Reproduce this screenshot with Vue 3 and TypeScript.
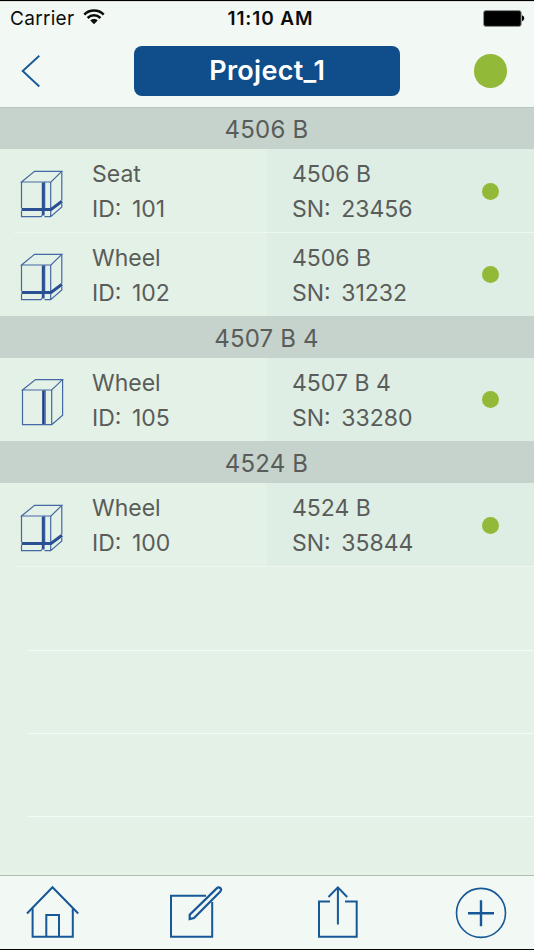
<script setup lang="ts">
interface Item {
  name: string
  id: string
  model: string
  sn: string
  banded: boolean
}
interface Section {
  title: string
  items: Item[]
}

const sections: Section[] = [
  {
    title: '4506 B',
    items: [
      { name: 'Seat', id: '101', model: '4506 B', sn: '23456', banded: true },
      { name: 'Wheel', id: '102', model: '4506 B', sn: '31232', banded: true },
    ],
  },
  {
    title: '4507 B 4',
    items: [{ name: 'Wheel', id: '105', model: '4507 B 4', sn: '33280', banded: false }],
  },
  {
    title: '4524 B',
    items: [{ name: 'Wheel', id: '100', model: '4524 B', sn: '35844', banded: true }],
  },
]
</script>

<template>
  <div class="screen">
    <header class="header">
      <div class="status">
        <div class="carrier">
          <span>Carrier</span>
          <svg class="wifi" width="22" height="16" viewBox="0 0 22 16">
            <g fill="none" stroke="#0b0d0c" stroke-width="2.5">
              <path d="M1.3 5.6C6.5.2 15.5.2 20.7 5.6" />
              <path d="M4.6 9C8.3 5.4 13.7 5.4 17.4 9" />
            </g>
            <path d="M7.3 11.5C9.3 9.6 12.7 9.6 14.7 11.5L11 15.2Z" fill="#0b0d0c" />
          </svg>
        </div>
        <span class="time">11:10 AM</span>
        <svg class="battery" width="42" height="17" viewBox="0 0 42 17">
          <rect x=".6" y=".6" width="37.6" height="15.8" rx="2.2" fill="#000" stroke="#8d918f" stroke-width="1" />
          <path d="M39 5.3Q41.2 6 41.2 8.3Q41.2 10.6 39 11.3Z" fill="#000" />
        </svg>
      </div>
      <nav class="nav">
        <svg class="back" width="20" height="34" viewBox="0 0 20 34">
          <path d="M18.3 1.7L1.7 17L18.3 32.5" fill="none" stroke="#175896" stroke-width="1.9" />
        </svg>
        <h1 class="title"><span>Project_1</span></h1>
        <i class="dot dot-large"></i>
      </nav>
    </header>

    <main class="list">
      <section v-for="section in sections" :key="section.title">
        <h2 class="section-title"><span>{{ section.title }}</span></h2>
        <div v-for="item in section.items" :key="item.id" class="row">
          <div class="cell left">
            <svg class="box" width="44" height="48" viewBox="0 0 44 48">
              <g v-if="item.banded" fill="none" stroke="#4468a3" stroke-width="1.2">
                <path d="M1.5 12L14.5 1.4H41.8L31 12Z" />
                <path d="M1.5 12V38M30.7 12V38M41.8 1.4V30.5M24.7 12V38" />
                <path d="M1.5 41V46.6H21L22 45.5M24.5 46.6H30.7L41.8 37V33.5M30.7 46.6V41" />
                <path d="M1.5 39.5H31L42 31.2" stroke="#2a4f93" stroke-width="3" />
                <path d="M23.2 12.5V45.5" stroke="#2a4f93" stroke-width="2.8" />
              </g>
              <g v-else fill="none" stroke="#4468a3" stroke-width="1.2">
                <path d="M2.5 12L15.5 1.6H42.6L31.7 12Z" />
                <path d="M2.5 12V46.7H31.7V12M42.6 1.6V37.3L31.7 46.7M25.2 12V46" />
                <path d="M23.4 12.5V46" stroke="#173a8a" stroke-width="2.4" />
              </g>
            </svg>
            <div class="lines">
              <div><span class="name">{{ item.name }}</span></div>
              <div><span class="key">ID:</span><span>{{ item.id }}</span></div>
            </div>
          </div>
          <div class="cell right">
            <div class="lines">
              <div><span>{{ item.model }}</span></div>
              <div><span class="key">SN:</span><span>{{ item.sn }}</span></div>
            </div>
            <i class="dot dot-row"></i>
          </div>
        </div>
      </section>
      <div v-for="n in 4" :key="n" class="empty"></div>
    </main>

    <footer class="toolbar">
      <svg width="54" height="54" viewBox="0 0 54 54" fill="none" stroke="#175896" stroke-width="2">
        <path d="M1 28.5L26.5 2.2L52.2 28.5" />
        <path d="M6.6 23.5V51.8H46.8V23.5M20.3 51V30H33V51" />
      </svg>
      <svg class="compose" width="54" height="54" viewBox="0 0 54 54" fill="none" stroke="#175896" stroke-width="2">
        <path d="M37 10.8H2V51.8H43.2V17" />
        <path d="M20.7 34V29.8L47.7 3.4C50.4 .9 53.6 4 51.1 6.7L25 33Z" stroke-width="2.2" />
      </svg>
      <svg class="share" width="42" height="54" viewBox="0 0 42 54" fill="none" stroke="#175896" stroke-width="2">
        <path d="M13 16.6H2V51.8H39.7V16.6H28" />
        <path d="M20.9 39.5V3M11.5 12L20.9 2.4L30.2 12" />
      </svg>
      <svg class="add" width="52" height="54" viewBox="0 0 52 54" fill="none" stroke="#175896">
        <circle cx="26" cy="27.9" r="24.5" stroke-width="1.6" />
        <path d="M13 28.2H39M26 15.2V41.2" stroke-width="2.4" />
      </svg>
    </footer>
  </div>
</template>

<style>
body {
  margin: 0;
}
</style>

<style scoped>
.screen {
  box-sizing: border-box;
  width: 534px;
  height: 950px;
  display: flex;
  flex-direction: column;
  overflow: hidden;
  border-top: 1px solid #000;
  border-bottom: 1px solid #000;
  background: #e4f1e6;
  color: #5a5c5a;
  font-family: Inter, "Liberation Sans", sans-serif;
  font-size: 23px;
}
.header {
  box-sizing: border-box;
  flex: none;
  height: 106.6px;
  border-bottom: 1px solid #b9c6bf;
  border-top: 1px solid #dce1de;
  background: #f2f8f4;
}
.status {
  display: grid;
  grid-template-columns: 1fr auto 1fr;
  align-items: center;
  height: 32px;
  padding: 0 9px 0 10px;
  font-size: 19px;
  color: #0b0d0c;
}
.carrier {
  display: flex;
  align-items: center;
  gap: 9px;
  letter-spacing: 0.3px;
}
.wifi {
  margin-bottom: 2px;
}
.time {
  padding-left: 6px;
  font-weight: 600;
  font-size: 19px;
  letter-spacing: 0.9px;
}
.battery {
  justify-self: end;
}
.nav {
  display: flex;
  align-items: center;
  justify-content: space-between;
  height: 50px;
  padding: 8px 27px 0 21px;
  margin-top: 4px;
}
.title {
  box-sizing: border-box;
  display: flex;
  align-items: center;
  justify-content: center;
  width: 266px;
  height: 50px;
  margin: 0 0 0 20px;
  padding-bottom: 2px;
  border-radius: 8px;
  background: #0f4e8a;
  color: #fff;
  font-size: 27px;
  font-weight: 600;
  letter-spacing: 0.3px;
}
.dot {
  flex: none;
  width: 17px;
  height: 17px;
  border-radius: 50%;
  background: #92b937;
}
.dot-large {
  width: 33.5px;
  height: 33.5px;
}
.dot-row {
  margin-top: 1px;
}
.list {
  flex: 1;
  min-height: 0;
  overflow: hidden;
}
.section-title {
  box-sizing: border-box;
  display: flex;
  align-items: center;
  justify-content: center;
  height: 41.7px;
  margin: 0;
  padding: 2.8px 1px 0 0;
  background: #c5d3cc;
  font-size: 24px;
  font-weight: 400;
  letter-spacing: 0.2px;
}
.row {
  position: relative;
  display: flex;
  height: 83.4px;
}
.row:not(:last-child)::after {
  content: "";
  position: absolute;
  left: 14px;
  right: 0;
  bottom: 0;
  height: 1px;
  background: #edf7f0;
}
.cell {
  box-sizing: border-box;
  display: flex;
  align-items: center;
  width: 267px;
}
.left {
  padding-left: 20px;
}
.right {
  justify-content: space-between;
  padding: 0 35px 0 25px;
  background: #deeee4;
}
.box {
  flex: none;
  margin: 6px 28px 0 0;
}
.lines {
  padding-top: 2.8px;
  line-height: 35px;
  white-space: nowrap;
}
.key {
  margin-right: 10.5px;
}
.empty {
  height: 83.4px;
  margin-left: 26.5px;
  box-sizing: border-box;
  border-top: 1px solid #f4fbf6;
}
section + .empty {
  margin-left: 14px;
  border-top-color: #edf7f0;
}
.toolbar {
  box-sizing: border-box;
  flex: none;
  display: flex;
  height: 74px;
  padding: 9px 27px 0 26px;
  border-top: 1px solid #b2bbb5;
  background: #f2f8f4;
}
.compose {
  margin-left: 89px;
}
.share {
  margin-left: 94px;
}
.add {
  margin-left: auto;
}
</style>
